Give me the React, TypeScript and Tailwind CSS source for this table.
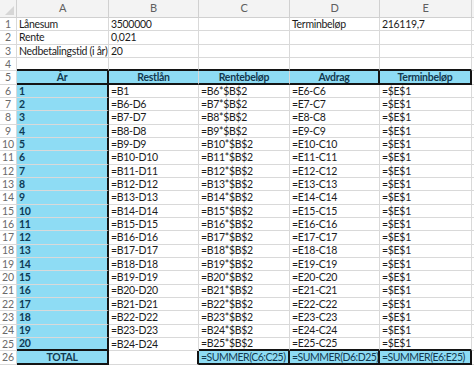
import React from "react";

type Cell = { text?: string; cls?: string };

const thin = "border-r border-b border-[#d9d9d9]";
const cyan = "bg-[#8edcf4]";

function buildRows(): Cell[][] {
  const rows: Cell[][] = [];
  // rows 1-4
  rows.push([
    { text: "Lånesum" },
    { text: "3500000" },
    {},
    { text: "Terminbeløp" },
    { text: "216119,7" },
  ]);
  rows.push([{ text: "Rente" }, { text: "0,021" }, {}, {}, {}]);
  rows.push([{ text: "Nedbetalingstid (i år)" }, { text: "20" }, {}, {}, {}]);
  rows.push([
    { cls: "border-b-2 border-b-[#141414]" },
    { cls: "border-b-2 border-b-[#141414]" },
    { cls: "border-b-2 border-b-[#141414]" },
    { cls: "border-b-2 border-b-[#141414]" },
    { cls: "border-b-2 border-b-[#141414]" },
  ]);
  // row 5 header
  const hd = `${cyan} justify-center font-bold text-[#12394f] border-b-2 border-b-[#141414]`;
  rows.push([
    { text: "År", cls: `${hd} border-r-2 border-r-[#141414]` },
    { text: "Restlån", cls: hd },
    { text: "Rentebeløp", cls: hd },
    { text: "Avdrag", cls: `${hd} border-r-2 border-r-[#141414]` },
    { text: "Terminbeløp", cls: `${hd} border-r-2 border-r-[#141414]` },
  ]);
  // rows 6-25
  for (let i = 1; i <= 20; i++) {
    const r = i + 5;
    const last = i === 20 ? " border-b-2 border-b-[#141414]" : "";
    rows.push([
      {
        text: String(i),
        cls: `${cyan} font-bold text-[#0e3a55] border-r-2 border-r-[#141414] border-b-[#8edcf4]${last}`,
      },
      { text: i === 1 ? "=B1" : `=B${r - 1}-D${r - 1}` },
      { text: `=B${r}*$B$2`, cls: last },
      { text: `=E${r}-C${r}`, cls: last },
      { text: "=$E$1", cls: last },
    ]);
  }
  // row 26
  const tot = `${cyan} text-[#12394f] border-r-2 border-r-[#141414] border-b-2 border-b-[#141414]`;
  const sum = `${tot} tracking-[-0.5px] px-[1px]`;
  rows.push([
    { text: "TOTAL", cls: `${tot} justify-center font-bold` },
    { cls: "border-r-2 border-r-[#141414]" },
    { text: "=SUMMER(C6:C25)", cls: sum },
    { text: "=SUMMER(D6:D25)", cls: sum },
    { text: "=SUMMER(E6:E25)", cls: sum },
  ]);
  return rows;
}

export default function App() {
  const rows = buildRows();
  const letters = ["A", "B", "C", "D", "E"];

  return (
    <div className="w-[474px] h-[368px] overflow-hidden bg-white font-['Lato','Liberation_Sans',sans-serif] text-[10.5px] tracking-[-0.3px] text-[#1c1c1c]">
      <div className="grid grid-cols-[17px_92px_90px_91px_90px_92px_1fr] grid-rows-[18px] auto-rows-[13.33px]">
        {/* column headers */}
        <div className="bg-[#f3f3f3] border-r border-b border-[#d0d0d0] flex items-end justify-end p-[2px]">
          <div className="w-0 h-0 border-l-[9px] border-l-transparent border-b-[9px] border-b-[#d6d6d6]" />
        </div>
        {letters.map((l) => (
          <div
            key={l}
            className="bg-[#f3f3f3] border-r border-b border-[#d0d0d0] flex items-center justify-center text-[#5f5f5f] text-[11px]"
          >
            {l}
          </div>
        ))}
        <div className="bg-[#f3f3f3] border-b border-[#d0d0d0]" />

        {rows.map((row, ri) => (
          <React.Fragment key={ri}>
            <div className="border-r border-b border-[#d9d9d9] flex items-center justify-center text-[#6a6a6a] leading-none tracking-normal">
              {ri + 1}
            </div>
            {row.map((c, ci) => (
              <div
                key={ci}
                className={`${thin} flex items-center px-[2px] leading-none whitespace-nowrap overflow-hidden ${c.cls ?? ""}`}
              >
                {c.text}
              </div>
            ))}
            <div className="border-b border-[#d9d9d9]" />
          </React.Fragment>
        ))}
      </div>
    </div>
  );
}
